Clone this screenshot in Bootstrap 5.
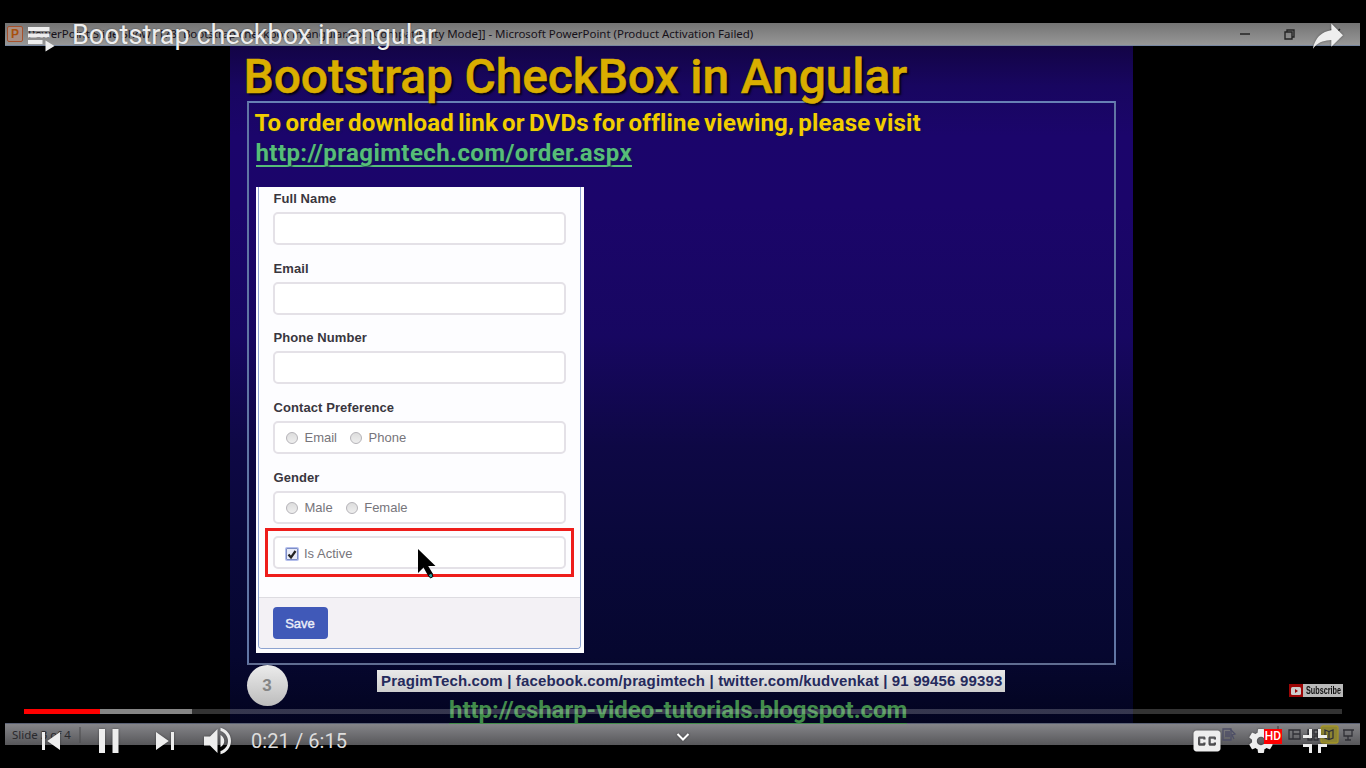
<!DOCTYPE html>
<html lang="en">
<head>
<meta charset="utf-8">
<meta name="viewport" content="width=device-width, initial-scale=1">
<title>Bootstrap checkbox in angular</title>
<link href="https://cdn.jsdelivr.net/npm/bootstrap@5.3.0/dist/css/bootstrap.min.css" rel="stylesheet">
<style>
body{background:#000;font-family:Roboto,"Liberation Sans",sans-serif;overflow:hidden}
.player{width:1366px;height:768px;padding-top:23px;overflow:hidden;white-space:nowrap}
.win-title{margin:0 6px 0 5px;height:23px;padding-left:2px;background:linear-gradient(#747474,#979797);border-bottom:1px solid #7686a0;font:11.5px/22px "Noto Sans",sans-serif;color:#161119}
.win-text{margin-left:5px;width:730px;letter-spacing:-.03px}
.ppt-icon{width:16px;height:16px;border:1px solid #a6512c;background:#a98f83;color:#a8500c;font:bold 12px/14px "Liberation Sans",sans-serif;text-align:center;border-radius:2px}
.slide-page{width:903px;height:677px;margin-left:230px;padding:5px 17px 0 16.5px;background:linear-gradient(#130446 0,#180660 40px,#1b056b 90px,#1b056a 160px,#170761 290px,#0e0845 400px,#09083a 500px,#06072f 610px,#030420 677px)}
.slide-title{height:50px;margin:0 0 0 -3px;font-size:48px;font-weight:500;line-height:52px;letter-spacing:-.13px;color:#d9ae00;-webkit-text-stroke:.5px;text-shadow:2px 2px 2px #05020f}
.frame{height:564px;border:2px solid #5f75a9;border-color:#6780b4 #6075a4 #606d91 #6075a4;padding:5px 0 0 7px}
.order-line{font-size:24px;font-weight:700;line-height:30px;color:#f2cd00;letter-spacing:.2px;word-spacing:-2px;margin-left:-1px;text-shadow:1px 1px 2px #10204a}
.order-link{letter-spacing:.41px;color:#56bd78;margin-left:0}
.order-link span,.blog-link span{display:inline-block;line-height:25px;height:26px;border-bottom:2px solid currentColor}
.shot{width:328px;height:466px;margin-top:19px;background:#fdfdff;padding:0 3px 4px 2px;border:0}
.shot-card{height:462px;border:1.5px solid #8da3d0;border-top:0;border-radius:0 0 4px 4px;padding:1px 0 0;font:13px/20px "Liberation Sans",Arial,sans-serif;color:#77757b}
.grp{margin:0 14px 12.67px 14.5px}
.grp b{display:block;height:20px;line-height:21px;margin-bottom:4px;padding-left:.5px;color:#39363e;letter-spacing:.08px}
.box{height:33px;border:2px solid #e4e1e7;border-radius:5px;padding:2px 0 0 11px;background:#fff}
.dot{width:12px;height:12px;border-radius:50%;border:1px solid #b5b3b8;background:linear-gradient(#ddd,#eee);margin-right:6.5px}
.dot2{margin-left:13px}
.tick{width:12px;height:12px;border:1px solid #7d8ec6;background:#e8ebf8;box-shadow:0 0 0 1px #b4beec;margin-right:6px;border-radius:1px}
.red-ring{outline:3px solid #ee1d1b;outline-offset:5px;border-radius:0}
.cursor{position:absolute;left:144px;top:12px}
.foot{height:51px;background:#f3f1f5;border-top:1px solid #dddce1;padding:9px 0 0 14px;border-radius:0 0 4px 4px}
.save{width:55px;height:32px;border-radius:4px;background:#4059b8;color:#eceef8;font:13px/33px "Liberation Sans",sans-serif;text-align:center;-webkit-text-stroke:.4px}
.num{width:41px;height:41px;border-radius:50%;background:linear-gradient(#ececec,#bcbcbc);font:bold 17px/41px "Liberation Sans",sans-serif;color:#858585;text-align:center}
.addr{width:628px;height:22px;margin:5px 0 0 89.5px;background:linear-gradient(#e9e9e9,#cecece);color:#252a5c;font:bold 15px/22px "Liberation Sans",sans-serif;letter-spacing:.15px;padding-left:4px}
.blog-link{font-size:24px;font-weight:700;line-height:30px;height:30px;margin:3px 0 0 161.5px;letter-spacing:-.06px;color:#428c4b}
.blog-link span{border-width:1.5px}
.win-status{height:22px;margin:0 6px 0 5px;padding:0 6px 0 7px;background:linear-gradient(#858589,#57575a);border-top:1px solid #5b6275;font:11.5px/18px "Noto Sans",sans-serif;color:#29292d}
.chrome{position:absolute;inset:0;width:1366px;height:768px;color:#eee}
.vid-title{font-size:27px;line-height:32px;margin-left:16px;padding-top:19px;text-shadow:0 0 2px #0006}
.track{height:5px;margin:0 24px;background:#ffffff33}
.ctl{height:54px;padding:0 24px}
.ctl svg,.share{width:54px;height:54px;flex:none;fill:#eee;filter:drop-shadow(0 0 1px #0006)}
.clock{font-size:20px;line-height:54px;margin-left:5px;color:#ddd;letter-spacing:.08px}
.hd{position:absolute;left:30px;top:15px;width:18px;height:15px;background:#f00;color:#fff;font:500 12px/15px Roboto,sans-serif;text-align:center}
.sub{width:54px;height:13px;background:#b9b9b9;color:#111;margin:0 23px 12px auto}
.sub i{width:14px;height:13px;background:#9c0606}
.sub u{text-decoration:none;display:block;font:bold 11.5px/13px "Liberation Sans",sans-serif;transform:scaleX(.63);transform-origin:0 0;margin-left:3px;width:36px}
</style>
</head>
<body>
<div class="player position-relative">
  <div class="win-title d-flex align-items-center">
    <div class="ppt-icon">P</div>
    <div class="win-text">PowerPoint Slide Show - [78. Bootstrap checkbox in angular.ppt [Compatibility Mode]] - Microsoft PowerPoint (Product Activation Failed)</div>
    <svg class="ms-auto" style="margin-right:10px" width="112" height="14" fill="none" stroke="#252525" stroke-width="1.4"><path d="M2 7h10M47 5h7v7h-7zM49 5V3h7v7h-2M93 2l9 9m0-9l-9 9"/></svg>
  </div>

  <div class="slide-page">
    <h1 class="slide-title">Bootstrap CheckBox in Angular</h1>
    <div class="frame">
      <div class="order-line">To order download link or DVDs for offline viewing, please visit</div>
      <div class="order-line order-link"><span>http://pragimtech.com/order.aspx</span></div>
      <div class="shot">
        <div class="shot-card d-flex flex-column">
          <div class="grp"><b>Full Name</b><div class="box"></div></div>
          <div class="grp"><b>Email</b><div class="box"></div></div>
          <div class="grp"><b>Phone Number</b><div class="box"></div></div>
          <div class="grp"><b>Contact Preference</b>
            <div class="box d-flex align-items-center"><i class="dot"></i>Email<i class="dot dot2"></i>Phone</div></div>
          <div class="grp"><b>Gender</b>
            <div class="box d-flex align-items-center"><i class="dot"></i>Male<i class="dot dot2"></i>Female</div></div>
          <div class="grp red-ring position-relative">
            <div class="box d-flex align-items-center"><i class="tick d-flex"><svg width="11" height="11" fill="none" stroke="#222" stroke-width="2.2"><path d="M1.500 5.500l2.500 3L8.500 2"/></svg></i>Is Active</div>
            <svg class="cursor" width="22" height="34"><path d="M1 1v24l5.500-5.500 5 9 4.500-2.500-4.800-8H18.500z"/><path d="M11 27l3.500-2 1.500 3.500-2.500 1.500z" fill="#28a0a0" stroke="#000" stroke-width="1"/></svg>
          </div>
          <div class="foot mt-auto"><div class="save">Save</div></div>
        </div>
      </div>
    </div>
    <div class="d-flex">
      <div class="num">3</div>
      <div>
        <div class="addr">PragimTech.com | facebook.com/pragimtech | twitter.com/kudvenkat | 91 99456 99393</div>
        <div class="blog-link"><span>http://csharp-video-tutorials.blogspot.com</span></div>
      </div>
    </div>
  </div>

  <div class="win-status d-flex align-items-center">
    <span>Slide 3 of 4</span>
    <svg style="margin-left:7px" width="4" height="20"><path d="M2 2v16" stroke="#4a4a4d"/></svg>
    <svg class="ms-auto" width="132" height="20" fill="none" stroke="#303036" stroke-width="1.3">
      <path d="M1 4h8v11H1zM3 7h5M3 9h5M3 11h5" stroke="#4d4e66"/><path d="M8 4l5 5-3 1 2 4" stroke="#4d4e66"/>
      <path d="M56 1v17" stroke="#4a4a4d"/>
      <path d="M67 5h11v9H67zM71 5v9M71 9h7M86 5h4v4h-4zM92 5h4v4h-4zM86 11h4v4h-4zM92 11h4v4h-4z"/>
      <rect x="99" y="1" width="17" height="17" rx="2" fill="#8c8432" stroke="#a39426"/>
      <path d="M103 5l4 1.500 4-1.500v8l-4 1.500-4-1.500zM107 7v7M121 5h11M122 5v6h8V5M126 11v4M123 15h6"/>
    </svg>
  </div>

  <div class="chrome d-flex flex-column">
    <div class="d-flex" style="height:64px">
      <svg width="28" height="26" fill="#eee" style="margin:26px 0 0 28px"><path d="M0 1h21.500v4H0zM0 7.500h21.500v4H0zM0 14h14.500v4H0zM17.500 14.500L26.500 20l-9 5.500z"/></svg>
      <div class="vid-title">Bootstrap checkbox in angular</div>
      <svg class="share ms-auto" viewBox="0 0 36 36" style="margin:9px 11px 0 0"><path d="m 20.20,14.19 0,-4.45 7.79,7.79 -7.79,7.62 0,-4.56 C 16.27,20.69 12.10,21.81 9.34,24.76 8.80,25.13 7.60,27.29 8.12,25.65 9.08,21.32 11.80,17.18 15.98,15.38 c 1.33,-0.60 2.76,-0.98 4.21,-1.19 z"/></svg>
    </div>
    <div class="sub d-flex mt-auto"><i class="d-flex align-items-center justify-content-center"><svg width="10" height="8"><rect width="10" height="8" rx="1.500" fill="#ccc"/><path d="M4 2v4l3-2z" fill="#9c0606"/></svg></i><u>Subscribe</u></div>
    <div class="track d-flex"><div style="width:76px;background:#f00"></div><div style="width:92px;background:#858585"></div></div>
    <div class="ctl d-flex position-relative">
      <svg viewBox="0 0 36 36"><path d="m12,12h2v12h-2zm3.500,6 8.500,6V12z"/></svg>
      <svg viewBox="0 0 36 36" style="margin:0 3px"><path d="M12,26h4V10h-4zM21,26h4V10h-4z"/></svg>
      <svg viewBox="0 0 36 36"><path d="M12,24 20.500,18 12,12V24zM22,12v12h2V12h-2z"/></svg>
      <svg viewBox="0 0 36 36"><path d="M8,21H12L17,26V10L12,15H8ZM19,14V22C20.480,21.320 21.500,19.770 21.500,18C21.500,16.260 20.480,14.740 19,14ZM19,11.290C21.890,12.150 24,14.830 24,18C24,21.170 21.890,23.850 19,24.710V26.770C23.010,25.860 26,22.280 26,18C26,13.720 23.010,10.140 19,9.230Z"/></svg>
      <div class="clock">0:21 / 6:15</div>
      <svg class="position-absolute" style="left:676px;top:18px;width:14px;height:10px"><path d="M1.500 2l5.500 5.500L12.500 2" fill="none" stroke="#fff" stroke-width="2"/></svg>
      <svg class="ms-auto" viewBox="0 0 36 36"><path fill-rule="evenodd" d="M11,11C9.890,11 9,11.900 9,13V23C9,24.100 9.890,25 11,25H25C26.100,25 27,24.100 27,23V13C27,11.900 26.100,11 25,11ZM17,17H15.500V16.500H13.500V19.500H15.500V19H17V20C17,20.550 16.550,21 16,21H13C12.450,21 12,20.550 12,20V16C12,15.450 12.450,15 13,15H16C16.550,15 17,15.450 17,16ZM24,17H22.500V16.500H20.500V19.500H22.500V19H24V20C24,20.550 23.550,21 23,21H20C19.450,21 19,20.550 19,20V16C19,15.450 19.450,15 20,15H23C23.550,15 24,15.450 24,16Z"/></svg>
      <div class="position-relative"><svg viewBox="0 0 36 36"><path fill-rule="evenodd" d="m 23.94,18.78 c .03,-0.25 .05,-0.51 .05,-0.78 0,-0.27 -0.02,-0.52 -0.05,-0.78 l 1.68,-1.32 c .15,-0.12 .19,-0.33 .09,-0.51 l -1.6,-2.76 c -0.09,-0.17 -0.31,-0.24 -0.48,-0.17 l -1.99,.8 c -0.41,-0.32 -0.86,-0.58 -1.35,-0.78 l -0.30,-2.12 c -0.02,-0.19 -0.19,-0.33 -0.39,-0.33 l -3.2,0 c -0.2,0 -0.36,.14 -0.39,.33 l -0.30,2.12 c -0.48,.2 -0.93,.47 -1.35,.78 l -1.99,-0.8 c -0.18,-0.07 -0.39,0 -0.48,.17 l -1.6,2.76 c -0.10,.17 -0.05,.39 .09,.51 l 1.68,1.32 c -0.03,.25 -0.05,.52 -0.05,.78 0,.26 .02,.52 .05,.78 l -1.68,1.32 c -0.15,.12 -0.19,.33 -0.09,.51 l 1.6,2.76 c .09,.17 .31,.24 .48,.17 l 1.99,-0.8 c .41,.32 .86,.58 1.35,.78 l .30,2.12 c .02,.19 .19,.33 .39,.33 l 3.2,0 c .2,0 .36,-0.14 .39,-0.33 l .30,-2.12 c .48,-0.2 .93,-0.47 1.35,-0.78 l 1.99,.8 c .18,.07 .39,0 .48,-0.17 l 1.6,-2.76 c .09,-0.17 .05,-0.39 -0.09,-0.51 l -1.68,-1.32 0,0 z m -5.94,2.01 c -1.54,0 -2.8,-1.25 -2.8,-2.8 0,-1.54 1.25,-2.8 2.8,-2.8 1.54,0 2.8,1.25 2.8,2.8 0,1.54 -1.25,2.8 -2.8,2.8 z"/></svg><span class="hd">HD</span></div>
      <svg viewBox="0 0 36 36"><path d="M14,14h-4v2h6v-6h-2zM22,14v-4h-2v6h6v-2zM20,26h2v-4h4v-2h-6zM10,22h4v4h2v-6h-6z"/></svg>
    </div>
  </div>
</div>
<script src="https://cdn.jsdelivr.net/npm/bootstrap@5.3.0/dist/js/bootstrap.bundle.min.js"></script>
</body>
</html>
